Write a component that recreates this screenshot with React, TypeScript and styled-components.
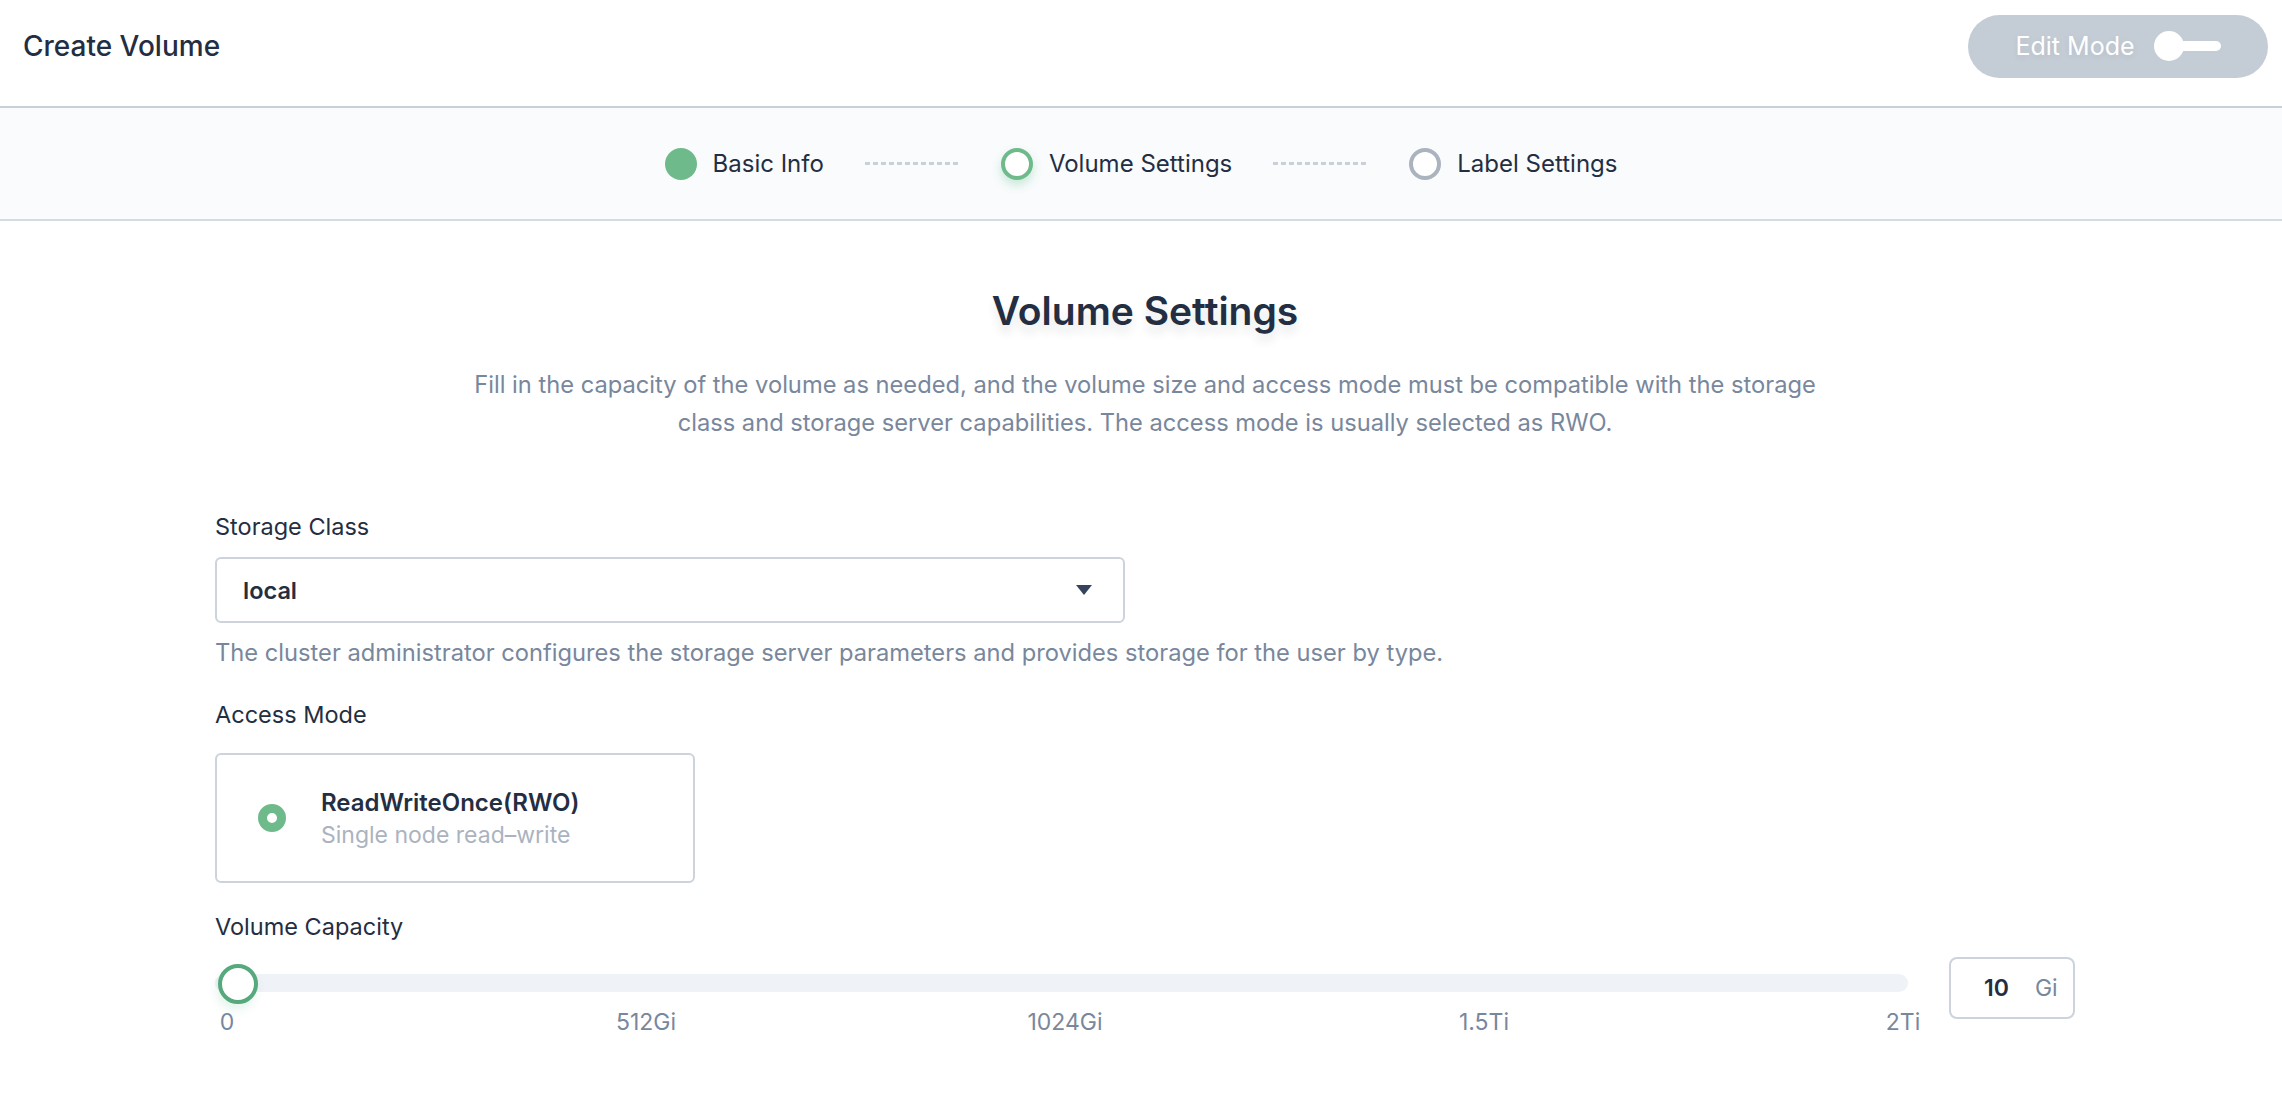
import React from "react";
import styled, { createGlobalStyle } from "styled-components";

const GlobalStyle = createGlobalStyle`
  body {
    margin: 0;
    background: #ffffff;
    font-family: Inter, "Noto Sans", sans-serif;
    color: #242e42;
  }
`;

const marks = [
  { label: "0", at: 0 },
  { label: "512Gi", at: 25 },
  { label: "1024Gi", at: 50 },
  { label: "1.5Ti", at: 75 },
  { label: "2Ti", at: 100 },
];

const steps = [
  { label: "Basic Info", state: "done" },
  { label: "Volume Settings", state: "active" },
  { label: "Label Settings", state: "todo" },
] as const;

export default function App() {
  return (
    <>
      <GlobalStyle />
      <Header>
        <Title>Create Volume</Title>
        <EditButton>
          Edit Mode
          <Toggle>
            <Knob />
            <Bar />
          </Toggle>
        </EditButton>
      </Header>

      <StepsBar>
        {steps.map((s, i) => (
          <React.Fragment key={s.label}>
            {i > 0 && <Dash />}
            <Step>
              <Dot $state={s.state} />
              <StepLabel>{s.label}</StepLabel>
            </Step>
          </React.Fragment>
        ))}
      </StepsBar>

      <Content>
        <Heading>Volume Settings</Heading>
        <Description>
          Fill in the capacity of the volume as needed, and the volume size and access mode must be
          compatible with the storage class and storage server capabilities. The access mode is
          usually selected as RWO.
        </Description>

        <FieldLabel $top={70}>Storage Class</FieldLabel>
        <Select>
          <SelectValue>local</SelectValue>
          <svg width="16" height="10" viewBox="0 0 16 10">
            <path d="M0 0h16L8 10z" fill="#36435c" />
          </svg>
        </Select>
        <Help>
          The cluster administrator configures the storage server parameters and provides storage
          for the user by type.
        </Help>

        <FieldLabel $top={32}>Access Mode</FieldLabel>
        <ModeCard>
          <Radio />
          <ModeText>
            <ModeTitle>ReadWriteOnce(RWO)</ModeTitle>
            <ModeDesc>Single node read–write</ModeDesc>
          </ModeText>
        </ModeCard>

        <FieldLabel $top={29}>Volume Capacity</FieldLabel>
        <SliderRow>
          <SliderBox>
            <Track />
            <Thumb />
            <Marks>
              {marks.map((m) => (
                <Mark key={m.label} style={{ left: `${m.at}%` }}>
                  {m.label}
                </Mark>
              ))}
            </Marks>
          </SliderBox>
          <Amount>
            <AmountValue>10</AmountValue>
            <AmountUnit>Gi</AmountUnit>
          </Amount>
        </SliderRow>
      </Content>
    </>
  );
}

const Header = styled.header`
  display: flex;
  align-items: center;
  justify-content: space-between;
  height: 92px;
  padding: 0 14px 14px 23px;
  border-bottom: 2px solid #c9d0d8;
`;

const Title = styled.h1`
  margin: 0;
  font-size: 28px;
  font-weight: 500;
  color: #242e42;
`;

const EditButton = styled.div`
  display: flex;
  align-items: center;
  justify-content: center;
  gap: 19px;
  width: 300px;
  height: 63px;
  border-radius: 32px;
  background: #c4ccd5;
  color: #ffffff;
  font-size: 25px;
  text-shadow: 0 2px 6px rgba(36, 46, 66, 0.08);
`;

const Toggle = styled.span`
  display: flex;
  align-items: center;
`;

const Knob = styled.span`
  width: 30px;
  height: 30px;
  border-radius: 50%;
  background: #ffffff;
`;

const Bar = styled.span`
  width: 44px;
  height: 10px;
  margin-left: -7px;
  border-radius: 5px;
  background: #ffffff;
`;

const StepsBar = styled.nav`
  display: flex;
  align-items: center;
  justify-content: center;
  gap: 41px;
  height: 111px;
  background: #f9fbfc;
  border-bottom: 2px solid #d5dbe2;
`;

const Step = styled.div`
  display: flex;
  align-items: center;
  gap: 16px;
`;

const Dot = styled.span<{ $state: "done" | "active" | "todo" }>`
  box-sizing: border-box;
  width: 32px;
  height: 32px;
  border-radius: 50%;
  background: ${(p) => (p.$state === "done" ? "#6fba8b" : "#ffffff")};
  border: ${(p) =>
    p.$state === "done" ? "none" : p.$state === "active" ? "4px solid #6fba8b" : "4px solid #abb3bf"};
  box-shadow: ${(p) => (p.$state === "active" ? "0 5px 10px rgba(85, 188, 138, 0.3)" : "none")};
`;

const StepLabel = styled.span`
  font-size: 24px;
  color: #242e42;
`;

const Dash = styled.span`
  width: 95px;
  height: 3px;
  background: repeating-linear-gradient(90deg, #c9d0d8 0 5px, transparent 5px 8px);
`;

const Content = styled.main`
  display: flex;
  flex-direction: column;
  align-items: flex-start;
  padding: 66px 207px 40px 215px;
`;

const Heading = styled.h2`
  align-self: center;
  margin: 0;
  font-size: 39px;
  line-height: 48px;
  font-weight: 600;
  color: #242e42;
  text-shadow: 0 8px 8px rgba(36, 46, 66, 0.1);
`;

const Description = styled.p`
  align-self: center;
  max-width: 1370px;
  margin: 31px 0 0;
  text-align: center;
  font-size: 23.7px;
  line-height: 38px;
  color: #79879c;
`;

const FieldLabel = styled.div<{ $top: number }>`
  margin-top: ${(p) => p.$top}px;
  font-size: 23.5px;
  line-height: 30px;
  color: #242e42;
`;

const Select = styled.div`
  box-sizing: border-box;
  display: flex;
  align-items: center;
  justify-content: space-between;
  width: 910px;
  height: 66px;
  margin-top: 15px;
  padding: 0 31px 0 26px;
  border: 2px solid #ccd3db;
  border-radius: 6px;
`;

const SelectValue = styled.span`
  font-size: 23.5px;
  font-weight: 600;
  color: #242e42;
`;

const Help = styled.div`
  margin-top: 15px;
  font-size: 23.7px;
  line-height: 30px;
  color: #79879c;
`;

const ModeCard = styled.div`
  box-sizing: border-box;
  display: flex;
  align-items: center;
  gap: 35px;
  width: 480px;
  height: 130px;
  margin-top: 23px;
  padding-left: 41px;
  border: 2px solid #ccd3db;
  border-radius: 6px;
`;

const Radio = styled.span`
  box-sizing: border-box;
  width: 28px;
  height: 28px;
  border-radius: 50%;
  border: 9px solid #6fba8b;
  background: #ffffff;
`;

const ModeText = styled.div`
  display: flex;
  flex-direction: column;
  gap: 4px;
`;

const ModeTitle = styled.span`
  font-size: 24px;
  font-weight: 600;
  color: #242e42;
`;

const ModeDesc = styled.span`
  font-size: 23px;
  color: #abb3bf;
`;

const SliderRow = styled.div`
  display: flex;
  align-items: flex-start;
  gap: 41px;
  align-self: stretch;
  margin-top: 15px;
`;

const SliderBox = styled.div`
  position: relative;
  flex: 1;
  padding-top: 17px;
`;

const Track = styled.div`
  height: 18px;
  border-radius: 9px;
  background: #eff2f7;
`;

const Thumb = styled.span`
  position: absolute;
  top: 7px;
  left: 3px;
  box-sizing: border-box;
  width: 40px;
  height: 40px;
  border-radius: 50%;
  background: #ffffff;
  border: 4px solid #55a97c;
  box-shadow: -2px 6px 10px rgba(85, 188, 138, 0.15);
`;

const Marks = styled.div`
  position: relative;
  height: 28px;
  margin: 16px 5px 0 12px;
`;

const Mark = styled.span`
  position: absolute;
  top: 0;
  transform: translateX(-50%);
  font-size: 23px;
  line-height: 28px;
  color: #79879c;
  white-space: nowrap;
`;

const Amount = styled.div`
  box-sizing: border-box;
  display: flex;
  align-items: center;
  gap: 26px;
  width: 126px;
  height: 62px;
  padding-left: 33px;
  border: 2px solid #ccd3db;
  border-radius: 8px;
`;

const AmountValue = styled.span`
  font-size: 23px;
  font-weight: 600;
  color: #242e42;
`;

const AmountUnit = styled.span`
  font-size: 23px;
  color: #79879c;
`;
